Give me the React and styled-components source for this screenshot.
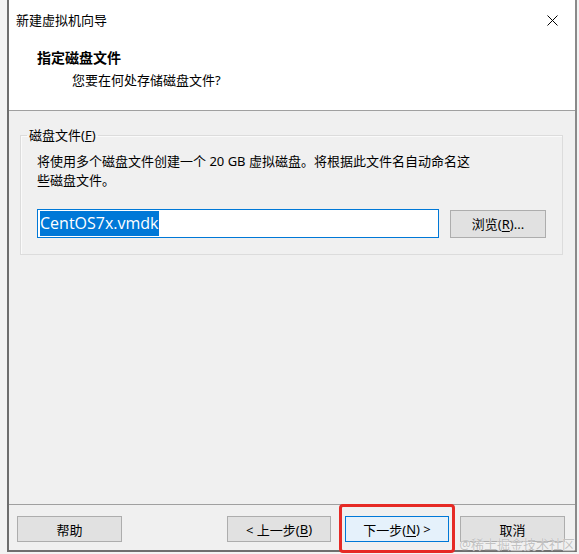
import React from "react";
import styled, { createGlobalStyle } from "styled-components";

const GlobalStyle = createGlobalStyle`
  html, body {
    margin: 0;
    padding: 0;
    background: #f3f3f3;
  }
  body {
    font-family: "Noto Sans", "Noto Sans CJK SC", sans-serif;
    font-size: 13px;
    color: #000;
  }
`;

const Page = styled.div`
  position: relative;
  width: 579px;
  height: 554px;
  overflow: hidden;
`;

const Window = styled.div`
  margin-left: 7px;
  width: 566px;
  height: 550px;
  display: flex;
  flex-direction: column;
  border-left: 2px solid #6e6e6e;
  border-right: 2px solid #8a8a8a;
  border-bottom: 2px solid #6e6e6e;
  background: #f0f0f0;
`;

const TitleBar = styled.div`
  height: 40px;
  display: flex;
  align-items: center;
  justify-content: space-between;
  padding: 0 17px 0 7px;
  background: #fff;
`;

const Title = styled.span`
  font-size: 13px;
  line-height: 18px;
`;

const Header = styled.div`
  height: 71px;
  display: flex;
  flex-direction: column;
  padding: 9px 0 0 28px;
  box-sizing: border-box;
  background: #fff;
  border-bottom: 1px solid #a0a0a0;
`;

const Heading = styled.div`
  font-weight: bold;
  font-size: 14px;
  line-height: 18px;
`;

const Subtitle = styled.div`
  line-height: 18px;
  margin: 4px 0 0 35px;
`;

const Body = styled.div`
  flex: 1;
  padding: 15px 15px 0 11px;
`;

const Group = styled.fieldset`
  margin: 0;
  padding: 8px 16px 16px 16px;
  border: 1px solid #dcdcdc;
  box-shadow: inset 1px 1px 0 #fafafa;
`;

const Legend = styled.legend`
  margin-left: -10px;
  padding: 0 2px;
  line-height: 18px;
`;

const Description = styled.p`
  margin: 0;
  max-width: 440px;
  line-height: 19px;
`;

const FileRow = styled.div`
  display: flex;
  align-items: center;
  gap: 11px;
  margin-top: 19px;
`;

const PathInput = styled.div`
  width: 402px;
  height: 29px;
  box-sizing: border-box;
  border: 1px solid #0078d7;
  background: #fff;
  display: flex;
  align-items: center;
  padding: 0 2px;
  font-family: "Open Sans", "Noto Sans", sans-serif;
  font-size: 16px;
`;

const Selected = styled.span`
  background: #0078d7;
  color: #fff;
  line-height: 25px;
`;

const Button = styled.button`
  width: ${(p) => p.$w || 104}px;
  height: ${(p) => p.$h || 26}px;
  box-sizing: border-box;
  border: 1px solid ${(p) => (p.$primary ? "#0078d7" : "#adadad")};
  background: ${(p) => (p.$primary ? "#e5f1fb" : "#e1e1e1")};
  font-family: inherit;
  font-size: 13px;
  color: #000;
  padding: 0;
  display: flex;
  align-items: center;
  justify-content: center;
  u {
    text-decoration: underline;
    text-underline-offset: 2px;
  }
`;

const Footer = styled.div`
  height: 46px;
  box-sizing: border-box;
  border-top: 1px solid #a0a0a0;
  display: flex;
  align-items: flex-start;
  padding: 11px 10px 0 8px;
`;

const Spacer = styled.div`
  flex: 1;
`;

const Highlight = styled.div`
  position: relative;
  margin: 0 11px 0 14px;
  &::after {
    content: "";
    position: absolute;
    left: -6px;
    right: -6px;
    top: -12px;
    bottom: -11px;
    border: 3px solid #e62a25;
    border-radius: 4px;
  }
`;

const Watermark = styled.span`
  position: absolute;
  right: 4px;
  bottom: 1px;
  font-size: 13px;
  color: #c2c2c2;
  text-shadow: 0 0 1px #fff;
`;

const CloseIcon = () => (
  <svg width="11" height="11" viewBox="0 0 11 11">
    <path d="M0.5 0.5 L10.5 10.5 M10.5 0.5 L0.5 10.5" stroke="#000" strokeWidth="1" fill="none" />
  </svg>
);

export default function App() {
  return (
    <Page>
      <GlobalStyle />
      <Window>
        <TitleBar>
          <Title>新建虚拟机向导</Title>
          <CloseIcon />
        </TitleBar>
        <Header>
          <Heading>指定磁盘文件</Heading>
          <Subtitle>您要在何处存储磁盘文件?</Subtitle>
        </Header>
        <Body>
          <Group>
            <Legend>
              磁盘文件(<u>F</u>)
            </Legend>
            <Description>
              将使用多个磁盘文件创建一个 20 GB 虚拟磁盘。将根据此文件名自动命名这些磁盘文件。
            </Description>
            <FileRow>
              <PathInput>
                <Selected>CentOS7x.vmdk</Selected>
              </PathInput>
              <Button $w={96} $h={28}>
                浏览(<u>R</u>)...
              </Button>
            </FileRow>
          </Group>
        </Body>
        <Footer>
          <Button $w={105}>帮助</Button>
          <Spacer />
          <Button>
            &lt; 上一步(<u>B</u>)
          </Button>
          <Highlight>
            <Button $primary>
              下一步(<u>N</u>) &gt;
            </Button>
          </Highlight>
          <Button $w={105}>取消</Button>
        </Footer>
      </Window>
      <Watermark>@稀土掘金技术社区</Watermark>
    </Page>
  );
}
